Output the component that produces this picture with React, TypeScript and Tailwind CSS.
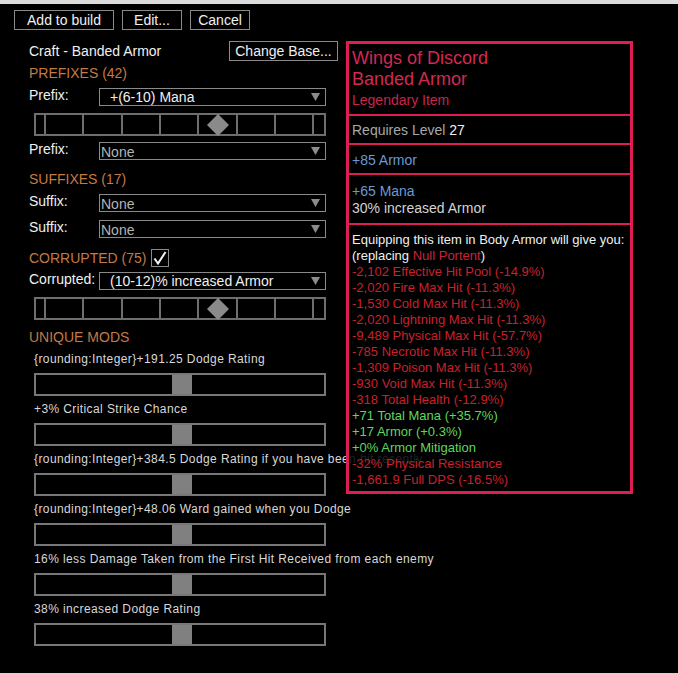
import React from "react";

const mods = [
  "{rounding:Integer}+191.25 Dodge Rating",
  "+3% Critical Strike Chance",
  "{rounding:Integer}+384.5 Dodge Rating if you have been hit recently",
  "{rounding:Integer}+48.06 Ward gained when you Dodge",
  "16% less Damage Taken from the First Hit Received from each enemy",
  "38% increased Dodge Rating",
];

const redLines1 = [
  "-2,102 Effective Hit Pool (-14.9%)",
  "-2,020 Fire Max Hit (-11.3%)",
  "-1,530 Cold Max Hit (-11.3%)",
  "-2,020 Lightning Max Hit (-11.3%)",
  "-9,489 Physical Max Hit (-57.7%)",
  "-785 Necrotic Max Hit (-11.3%)",
  "-1,309 Poison Max Hit (-11.3%)",
  "-930 Void Max Hit (-11.3%)",
  "-318 Total Health (-12.9%)",
];
const greenLines = ["+71 Total Mana (+35.7%)", "+17 Armor (+0.3%)", "+0% Armor Mitigation"];
const redLines2 = ["-32% Physical Resistance", "-1,661.9 Full DPS (-16.5%)"];

function Arrow() {
  return (
    <svg width="9" height="8" viewBox="0 0 9 8" className="shrink-0">
      <polygon points="0,0 9,0 4.5,8" fill="#8c8c8c" />
    </svg>
  );
}

function Dropdown({ value, none }: { value: string; none?: boolean }) {
  return (
    <div className="w-[227px] h-[18px] border border-[#8a8a8a] flex items-center pr-[5px]">
      <span
        className={
          none
            ? "flex-1 pl-[1px] text-[14px] leading-[16px] text-[#b4b4b4] pt-[2px]"
            : "flex-1 pl-[10px] text-[14px] leading-[16px] text-[#f0f0f0]"
        }
      >
        {value}
      </span>
      <Arrow />
    </div>
  );
}

function Row({ label, value, none, className }: { label: string; value: string; none?: boolean; className: string }) {
  return (
    <div className={"flex items-start " + className}>
      <span className="w-[70px] text-[14px] leading-[16px] -mt-px text-[#f0f0f0]">{label}</span>
      <Dropdown value={value} none={none} />
    </div>
  );
}

function TickSlider({ className }: { className: string }) {
  const ticks = [11, 49, 88, 126, 164, 203, 241, 279];
  return (
    <div className={"ml-[5px] w-[292px] h-[23px] " + className}>
      <svg width="292" height="23" viewBox="0 0 292 23" className="block">
        <rect x="1" y="1" width="290" height="21" fill="none" stroke="#6e6e6e" strokeWidth="2" />
        {ticks.map((t) => (
          <line key={t} x1={t} y1="0" x2={t} y2="23" stroke="#6e6e6e" strokeWidth="2" />
        ))}
        <polygon points="184,1 195,12 184,23 173,12" fill="#8a8a8a" />
      </svg>
    </div>
  );
}

function ModSlider() {
  return (
    <div className="ml-[5px] mt-[7px] w-[292px] h-[23px] border-2 border-[#777777] flex justify-center pl-[3px]">
      <div className="w-[20px] h-full bg-[#808080]" />
    </div>
  );
}

function Heading({ children, className }: { children: React.ReactNode; className: string }) {
  return <div className={"text-[14px] leading-[16px] text-[#c47a45] " + className}>{children}</div>;
}

export default function App() {
  return (
    <div className="relative w-[678px] h-[673px] bg-black overflow-hidden font-['Liberation_Sans',Arial,sans-serif]">
      <div className="h-[4px] bg-[#dcdcdc]" />
      <div className="flex gap-[8px] pl-[14px] mt-[6px]">
        <button className="w-[100px] h-[20px] border border-[#8a8a8a] text-[14px] leading-[16px] text-[#f0f0f0]">Add to build</button>
        <button className="w-[60px] h-[20px] border border-[#8a8a8a] text-[14px] leading-[16px] text-[#f0f0f0]">Edit...</button>
        <button className="w-[60px] h-[20px] border border-[#8a8a8a] text-[14px] leading-[16px] text-[#f0f0f0]">Cancel</button>
      </div>
      <div className="pl-[29px] w-[338px]">
        <div className="mt-[11px] h-[20px] flex items-center justify-between">
          <span className="text-[14px] leading-[20px] text-[#f0f0f0]">Craft - Banded Armor</span>
          <button className="w-[109px] h-[20px] border border-[#8a8a8a] text-[14px] leading-[16px] text-[#f0f0f0]">Change Base...</button>
        </div>
        <Heading className="mt-[4px]">PREFIXES (42)</Heading>
        <Row className="mt-[7px]" label="Prefix:" value="+(6-10) Mana" />
        <TickSlider className="mt-[7px]" />
        <Row className="mt-[6px]" label="Prefix:" value="None" none />
        <Heading className="mt-[11px]">SUFFIXES (17)</Heading>
        <Row className="mt-[7px]" label="Suffix:" value="None" none />
        <Row className="mt-[8px]" label="Suffix:" value="None" none />
        <div className="mt-[11px] h-[18px] flex items-center gap-[5px]">
          <Heading className="">CORRUPTED (75)</Heading>
          <div className="w-[18px] h-[18px] border border-[#8a8a8a] flex items-center justify-center">
            <svg width="14" height="14" viewBox="0 0 14 14">
              <polyline points="1.5,7.5 5,12.5 12.5,1" fill="none" stroke="#f4f4f4" strokeWidth="2" />
            </svg>
          </div>
        </div>
        <Row className="mt-[5px]" label="Corrupted:" value="(10-12)% increased Armor" />
        <TickSlider className="mt-[7px]" />
        <Heading className="mt-[9px]">UNIQUE MODS</Heading>
        <div className="mt-[7px] flex flex-col gap-[6px]">
          {mods.map((m) => (
            <div key={m}>
              <div className="ml-[5px] text-[12px] leading-[14px] tracking-[0.4px] text-[#d8d8d8] whitespace-nowrap">{m}</div>
              <ModSlider />
            </div>
          ))}
        </div>
      </div>

      <div className="absolute left-[346px] top-[41px] w-[287px] border-[3px] border-[#dc1e55] bg-[rgba(0,0,0,0.86)]">
        <div className="pl-[3px] pt-[3px] pb-[4px]">
          <div className="text-[18px] leading-[22px] text-[#d42852]">Wings of Discord</div>
          <div className="text-[18px] leading-[21px] text-[#d42852]">Banded Armor</div>
          <div className="text-[14px] leading-[20px] text-[#c8244c]">Legendary Item</div>
        </div>
        <div className="border-t-2 border-[#dc1e55] pl-[3px] pt-[6px] pb-[4px] text-[14px] leading-[17px]">
          <span className="text-[#a8a8a8]">Requires Level </span>
          <span className="text-[#f0f0f0]">27</span>
        </div>
        <div className="border-t-2 border-[#dc1e55] pl-[3px] pt-[7px] pb-[4px] text-[14px] leading-[17px] text-[#6a9ad6]">+85 Armor</div>
        <div className="border-t-2 border-[#dc1e55] pl-[3px] pt-[8px] pb-[6px] text-[14px] leading-[17px]">
          <div className="text-[#6a9ad6]">+65 Mana</div>
          <div className="text-[#d4d4d4]">30% increased Armor</div>
        </div>
        <div className="border-t-2 border-[#dc1e55] pl-[3px] pt-[7px] pb-[3px] text-[13px] leading-[16px] whitespace-nowrap">
          <div className="text-[#f0f0f0]">Equipping this item in Body Armor will give you:</div>
          <div className="text-[#f0f0f0]">
            (replacing <span className="text-[#c8243a]">Null Portent</span>)
          </div>
          {redLines1.map((l) => (
            <div key={l} className="text-[#c8202e]">{l}</div>
          ))}
          {greenLines.map((l) => (
            <div key={l} className="text-[#5fd65f]">{l}</div>
          ))}
          {redLines2.map((l) => (
            <div key={l} className="text-[#c8202e]">{l}</div>
          ))}
        </div>
      </div>
    </div>
  );
}
